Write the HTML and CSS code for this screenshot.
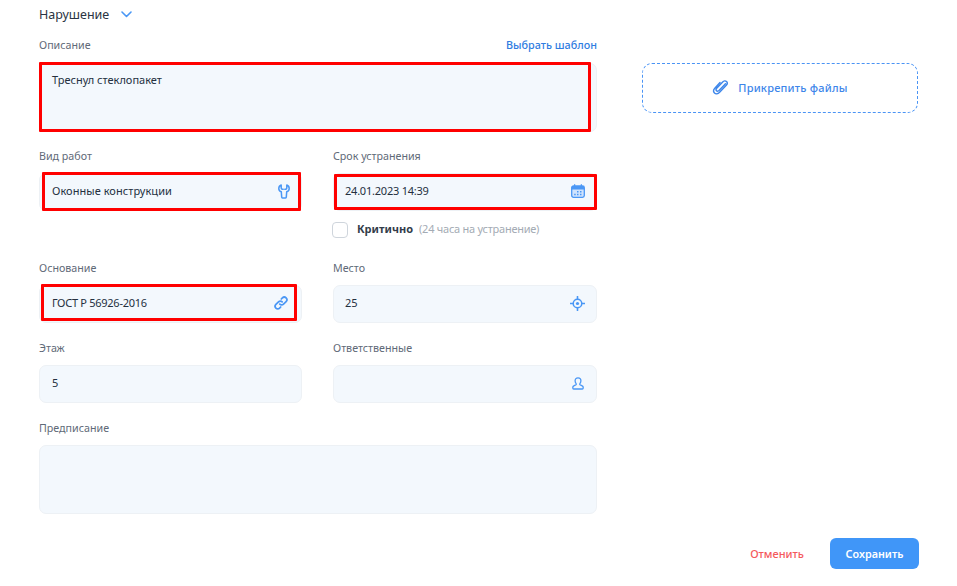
FILE: index.html
```html
<!DOCTYPE html>
<html lang="ru">
<head>
<meta charset="utf-8">
<title>Нарушение</title>
<link rel="stylesheet" href="styles.css">
</head>
<body>
<div class="page">
  <main class="form">
    <div class="heading">
      <span>Нарушение</span>
      <svg class="chev" width="11" height="7" viewBox="0 0 11 7"><path d="M1 1l4.500 4.500L10 1" fill="none" stroke="#4a97f5" stroke-width="1.600" stroke-linecap="round" stroke-linejoin="round"/></svg>
    </div>
    <div class="label-row label-first"><span class="label">Описание</span><a class="link">Выбрать шаблон</a></div>
    <div class="field area field-left"><span>Треснул стеклопакет</span><i class="mark mark-desc"></i></div>

    <div class="grid grid-1">
      <div>
        <div class="label">Вид работ</div>
        <div class="field field-left"><span class="wide">Оконные конструкции</span>
          <svg class="icon" width="12" height="15" viewBox="0 0 12 15"><path d="M3.200 1C1.700 1.600.8 2.900.8 4.400c0 1.700 1 2.900 2.500 3.400l.4 5.300c0 .5.300.8.800.8h3c.5 0 .8-.3.800-.8l.4-5.300c1.500-.5 2.500-1.700 2.500-3.400 0-1.500-.9-2.800-2.400-3.400v3.100c0 .7-.5 1.200-1.200 1.200h-.8M3.200 1v3.100c0 .7.500 1.200 1.200 1.200h.8" fill="none" stroke="#4a97f5" stroke-width="1.500" stroke-linecap="round" stroke-linejoin="round"/></svg>
          <i class="mark mark-work"></i>
        </div>
      </div>
      <div>
        <div class="label">Срок устранения</div>
        <div class="field"><span class="num">24.01.2023 14:39</span>
          <svg class="icon" width="14" height="14" viewBox="0 0 14 14"><rect x=".7" y="2" width="12.600" height="11.300" rx="1.800" fill="#cfe3fd" stroke="#4a97f5" stroke-width="1.300"/><path d="M.7 3.600c0-.9.7-1.600 1.600-1.600h9.400c.9 0 1.600.7 1.600 1.600v1.900H.7z" fill="#4a97f5"/><path d="M3.700.6v2.400M10.300.6v2.400" stroke="#4a97f5" stroke-width="1.200" stroke-linecap="round"/><path d="M6 7h1.500v1.500H6zM9 7h1.500v1.500H9zM3.200 9.800h1.500v1.500H3.200zM6 9.800h1.500v1.500H6zM9 9.800h1.500v1.500H9z" fill="#4a97f5"/></svg>
          <i class="mark mark-date"></i>
        </div>
        <label class="check"><span class="box"></span><b>Критично</b><span class="hint">(24 часа на устранение)</span></label>
      </div>
    </div>

    <div class="grid grid-2">
      <div>
        <div class="label">Основание</div>
        <div class="field field-left"><span class="num num-tight">ГОСТ Р 56926-2016</span>
          <svg class="icon icon-link" width="14" height="14" viewBox="0 0 14 14"><path d="M5.800 8.200a2.600 2.600 0 0 0 3.700 0l2.600-2.600a2.600 2.600 0 0 0-3.700-3.700L7.300 3" fill="none" stroke="#4a97f5" stroke-width="1.700" stroke-linecap="round"/><path d="M8.200 5.800a2.600 2.600 0 0 0-3.700 0L1.900 8.400a2.600 2.600 0 0 0 3.700 3.700L6.700 11" fill="none" stroke="#4a97f5" stroke-width="1.700" stroke-linecap="round"/></svg>
          <i class="mark mark-basis"></i>
        </div>
      </div>
      <div>
        <div class="label">Место</div>
        <div class="field"><span>25</span>
          <svg class="icon" width="15" height="15" viewBox="0 0 14 14"><circle cx="7" cy="7" r="4" fill="none" stroke="#4a97f5" stroke-width="1.400"/><circle cx="7" cy="7" r="1.500" fill="#4a97f5"/><path d="M7 .5V3M7 11v2.500M.5 7H3M11 7h2.500" stroke="#4a97f5" stroke-width="1.500" stroke-linecap="round"/></svg>
        </div>
      </div>
    </div>

    <div class="grid grid-3">
      <div>
        <div class="label">Этаж</div>
        <div class="field field-left"><span>5</span></div>
      </div>
      <div>
        <div class="label">Ответственные</div>
        <div class="field"><span></span>
          <svg class="icon icon-user" width="12" height="13" viewBox="0 0 12 13"><path d="M6 .8c-1.800 0-2.900 1.300-2.900 3 0 1.200.4 2.100 1 2.800.2.300.2.900-.1 1.200-.5.400-1.500.7-2.200 1.100-.6.300-1 .8-1 1.500v.7c0 .5.400.9.900.9h8.600c.5 0 .9-.4.900-.9v-.7c0-.7-.4-1.200-1-1.500-.7-.4-1.700-.7-2.200-1.100-.3-.3-.3-.9-.1-1.200.6-.7 1-1.600 1-2.800 0-1.700-1.100-3-2.900-3z" fill="none" stroke="#4a97f5" stroke-width="1.300" stroke-linejoin="round"/></svg>
        </div>
      </div>
    </div>

    <div class="label label-last">Предписание</div>
    <div class="field area"></div>
  </main>

  <aside class="side">
    <div class="attach">
      <svg width="16" height="17" viewBox="0 0 16 17"><path d="M13.500 4.700 7 11.600c-.8.800-1.900.8-2.500.1-.6-.6-.6-1.600.2-2.400l6-6.400c1.200-1.300 2.800-1.400 3.800-.4s.9 2.600-.2 3.800L7.600 13.200c-1.800 1.900-3.800 2.100-5.100.8-1.300-1.300-1.100-3.400.5-5.100L8 3.600" fill="none" stroke="#3d86ea" stroke-width="1.400" stroke-linecap="round" stroke-linejoin="round"/></svg>
      <span>Прикрепить файлы</span>
    </div>
  </aside>

  <footer class="actions">
    <a class="cancel">Отменить</a>
    <button class="save" type="button">Сохранить</button>
  </footer>
</div>
</body>
</html>
```
FILE: styles.css
```css
* { box-sizing: border-box; }
html, body { margin: 0; padding: 0; background: #fff; }
body {
  width: 957px;
  height: 586px;
  overflow: hidden;
  font-family: "Noto Sans", sans-serif;
  font-size: 11px;
  color: #24303f;
}
.page {
  display: grid;
  grid-template-columns: 558px 276px;
  grid-template-rows: 508px auto;
  column-gap: 45px;
  padding: 6px 0 0 39px;
  height: 586px;
}
.form { grid-column: 1; grid-row: 1; }
.heading {
  display: flex;
  align-items: center;
  gap: 12px;
  height: 18px;
  font-size: 12.5px;
  line-height: 18px;
  color: #2a3442;
}
.chev { margin-top: -1px; }
.label-row { display: flex; justify-content: space-between; align-items: center; }
.label-first { margin-top: 13px; margin-bottom: 10px; height: 16px; }
.label {
  color: #5f6a78;
  font-size: 10.7px;
  line-height: 16px;
  height: 16px;
}
.grid > div > .label { margin-bottom: 9px; }
.link { color: #2f7de1; font-size: 10.8px; font-weight: 500; line-height: 16px; }
.field {
  position: relative;
  height: 38px;
  padding: 0 12px 2px 11px;
  display: flex;
  align-items: center;
  justify-content: space-between;
  line-height: 16px;
  background: #f3f8fd;
  border: 1px solid #edf1f5;
  border-radius: 7px;
}
.field-left { padding-left: 12px; }
.area {
  height: 69px;
  align-items: flex-start;
  padding-top: 8px;
  padding-bottom: 0;
}
.wide { letter-spacing: .05px; }
.num { letter-spacing: -.22px; }
.num-tight { letter-spacing: -.28px; }
.icon { margin-right: -1px; flex: none; }
.icon-link { margin-right: 1px; }
.icon-user { margin-right: 0; }
.grid {
  display: grid;
  grid-template-columns: 263px 264px;
  column-gap: 31px;
}
.grid-1 { margin-top: 16px; }
.grid-2 { margin-top: 22px; }
.grid-3 { margin-top: 17px; }
.label-last { margin-top: 17px; margin-bottom: 9px; }
.check {
  display: flex;
  align-items: center;
  height: 16px;
  margin-top: 11px;
  line-height: 14px;
}
.box {
  width: 16px;
  height: 16px;
  margin-left: -1px;
  margin-right: 9px;
  border: 1.5px solid #cfd5dc;
  border-radius: 4px;
  background: #fff;
}
.check b { font-weight: 700; color: #333d4a; margin-right: 6px; padding-bottom: 2px; }
.hint { color: #a4abb4; letter-spacing: -.25px; padding-bottom: 2px; }
.mark {
  position: absolute;
  border: 3px solid #f00;
  border-radius: 1px;
  pointer-events: none;
}
.mark-desc { left: -1px; top: -2px; width: 552px; height: 70px; }
.mark-work { left: 2px; top: -2px; width: 259px; height: 39px; }
.mark-date { left: 0; top: 0; width: 263px; height: 36px; }
.mark-basis { left: 1px; top: -2px; width: 256px; height: 37px; }
.side { grid-column: 2; grid-row: 1; padding-top: 57px; }
.attach {
  height: 50px;
  display: flex;
  align-items: center;
  justify-content: center;
  gap: 10px;
  padding: 0 0 2px 0;
  border: 1px dashed #4a94f5;
  border-radius: 10px;
  color: #3d86ea;
  font-weight: 500;
  letter-spacing: .22px;
}
.actions {
  grid-column: 2;
  grid-row: 2;
  display: flex;
  align-items: center;
  justify-content: flex-end;
  gap: 26px;
  margin-right: -1px;
  height: 31px;
  margin-top: 24px;
}
.cancel { color: #f4595c; font-weight: 500; }
.save {
  width: 89px;
  height: 31px;
  padding: 0;
  border: 0;
  border-radius: 6px;
  background: #4096f8;
  color: #fff;
  font: 600 10.8px "Noto Sans", sans-serif;
}
```
